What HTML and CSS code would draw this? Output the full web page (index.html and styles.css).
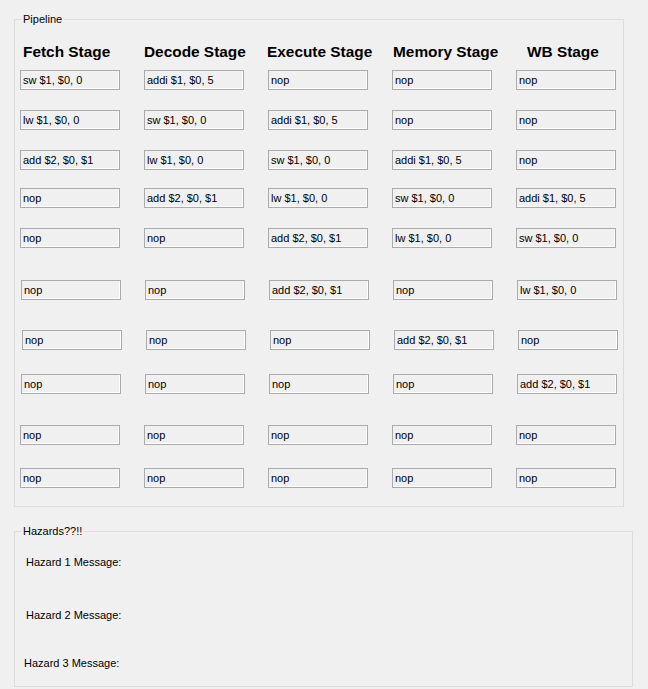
FILE: index.html
```html
<!DOCTYPE html>
<html lang="en">
<head>
<meta charset="utf-8">
<title>Pipeline</title>
<link rel="stylesheet" href="styles.css">
</head>
<body>
<main class="form">
  <fieldset class="group pipeline">
    <legend class="group-title">Pipeline</legend>
    <div class="stages">
      <div class="heads">
        <h2 class="head">Fetch Stage</h2>
        <h2 class="head">Decode Stage</h2>
        <h2 class="head">Execute Stage</h2>
        <h2 class="head">Memory Stage</h2>
        <h2 class="head">WB Stage</h2>
      </div>
      <div class="row">
        <div class="tb">sw $1, $0, 0</div><div class="tb">addi $1, $0, 5</div><div class="tb">nop</div><div class="tb">nop</div><div class="tb">nop</div>
      </div>
      <div class="row">
        <div class="tb">lw $1, $0, 0</div><div class="tb">sw $1, $0, 0</div><div class="tb">addi $1, $0, 5</div><div class="tb">nop</div><div class="tb">nop</div>
      </div>
      <div class="row">
        <div class="tb">add $2, $0, $1</div><div class="tb">lw $1, $0, 0</div><div class="tb">sw $1, $0, 0</div><div class="tb">addi $1, $0, 5</div><div class="tb">nop</div>
      </div>
      <div class="row">
        <div class="tb">nop</div><div class="tb">add $2, $0, $1</div><div class="tb">lw $1, $0, 0</div><div class="tb">sw $1, $0, 0</div><div class="tb">addi $1, $0, 5</div>
      </div>
      <div class="row">
        <div class="tb">nop</div><div class="tb">nop</div><div class="tb">add $2, $0, $1</div><div class="tb">lw $1, $0, 0</div><div class="tb">sw $1, $0, 0</div>
      </div>
      <div class="row">
        <div class="tb">nop</div><div class="tb">nop</div><div class="tb">add $2, $0, $1</div><div class="tb">nop</div><div class="tb">lw $1, $0, 0</div>
      </div>
      <div class="row">
        <div class="tb">nop</div><div class="tb">nop</div><div class="tb">nop</div><div class="tb">add $2, $0, $1</div><div class="tb">nop</div>
      </div>
      <div class="row">
        <div class="tb">nop</div><div class="tb">nop</div><div class="tb">nop</div><div class="tb">nop</div><div class="tb">add $2, $0, $1</div>
      </div>
      <div class="row">
        <div class="tb">nop</div><div class="tb">nop</div><div class="tb">nop</div><div class="tb">nop</div><div class="tb">nop</div>
      </div>
      <div class="row">
        <div class="tb">nop</div><div class="tb">nop</div><div class="tb">nop</div><div class="tb">nop</div><div class="tb">nop</div>
      </div>
    </div>
  </fieldset>

  <fieldset class="group hazards">
    <legend class="group-title">Hazards??!!</legend>
    <div class="msgs">
      <p class="msg">Hazard 1 Message:</p>
      <p class="msg">Hazard 2 Message:</p>
      <p class="msg">Hazard 3 Message:</p>
    </div>
  </fieldset>
</main>
</body>
</html>
```

FILE: styles.css
```css
html, body {
  margin: 0;
  padding: 0;
  background: #f0f0f0;
}

body {
  font-family: "Liberation Sans", Arial, sans-serif;
  font-size: 11px;
  color: #000;
}

.form {
  padding: 0 0 0 14px;
}

.group {
  margin: 0;
  padding: 0;
  border: 1px solid #dcdcdc;
  box-sizing: border-box;
  min-width: 0;
}

.group-title {
  margin-left: 6px;
  padding: 0 2px;
  font-size: 11px;
  line-height: 13px;
}

.pipeline {
  margin-top: 13px;
  width: 610px;
  padding-bottom: 18px;
}

.stages {
  padding-left: 5px;
}

.heads {
  display: grid;
  grid-template-columns: repeat(5, 100px);
  column-gap: 24px;
  margin: 17px 0 9px;
}

.head {
  margin: 0;
  font-size: 15.4px;
  line-height: 18px;
  font-weight: bold;
  white-space: nowrap;
}

.head:nth-child(1) { margin-left: 3px; }
.head:nth-child(2) { margin-left: 0; }
.head:nth-child(3) { margin-left: -1px; }
.head:nth-child(4) { margin-left: 1px; }
.head:nth-child(5) { margin-left: 11px; }

.row {
  display: grid;
  grid-template-columns: repeat(5, 100px);
  column-gap: 24px;
}

.row:nth-child(3) { margin-top: 20px; }
.row:nth-child(4) { margin-top: 20px; }
.row:nth-child(5) { margin-top: 18px; }
.row:nth-child(6) { margin-top: 20px; }
.row:nth-child(7) { margin-top: 32px; margin-left: 1px; }
.row:nth-child(8) { margin-top: 30px; margin-left: 2px; }
.row:nth-child(9) { margin-top: 24px; margin-left: 1px; }
.row:nth-child(10) { margin-top: 31px; }
.row:nth-child(11) { margin-top: 23px; }

.tb {
  box-sizing: border-box;
  height: 20px;
  border: 1px solid #ababab;
  box-shadow: inset -1px -1px 0 #ffffff;
  background: #f0f0f0;
  padding: 0 2px;
  font-size: 11px;
  line-height: 18px;
  white-space: nowrap;
  overflow: hidden;
}

.hazards {
  margin-top: 18px;
  width: 619px;
  padding-bottom: 16px;
}

.msgs {
  padding-left: 11px;
}

.msg {
  margin: 0;
  font-size: 11px;
  line-height: 13px;
}

.msg:nth-child(1) { margin-top: 18px; }
.msg:nth-child(2) { margin-top: 40px; }
.msg:nth-child(3) { margin-top: 35px; margin-left: -2px; }
```
